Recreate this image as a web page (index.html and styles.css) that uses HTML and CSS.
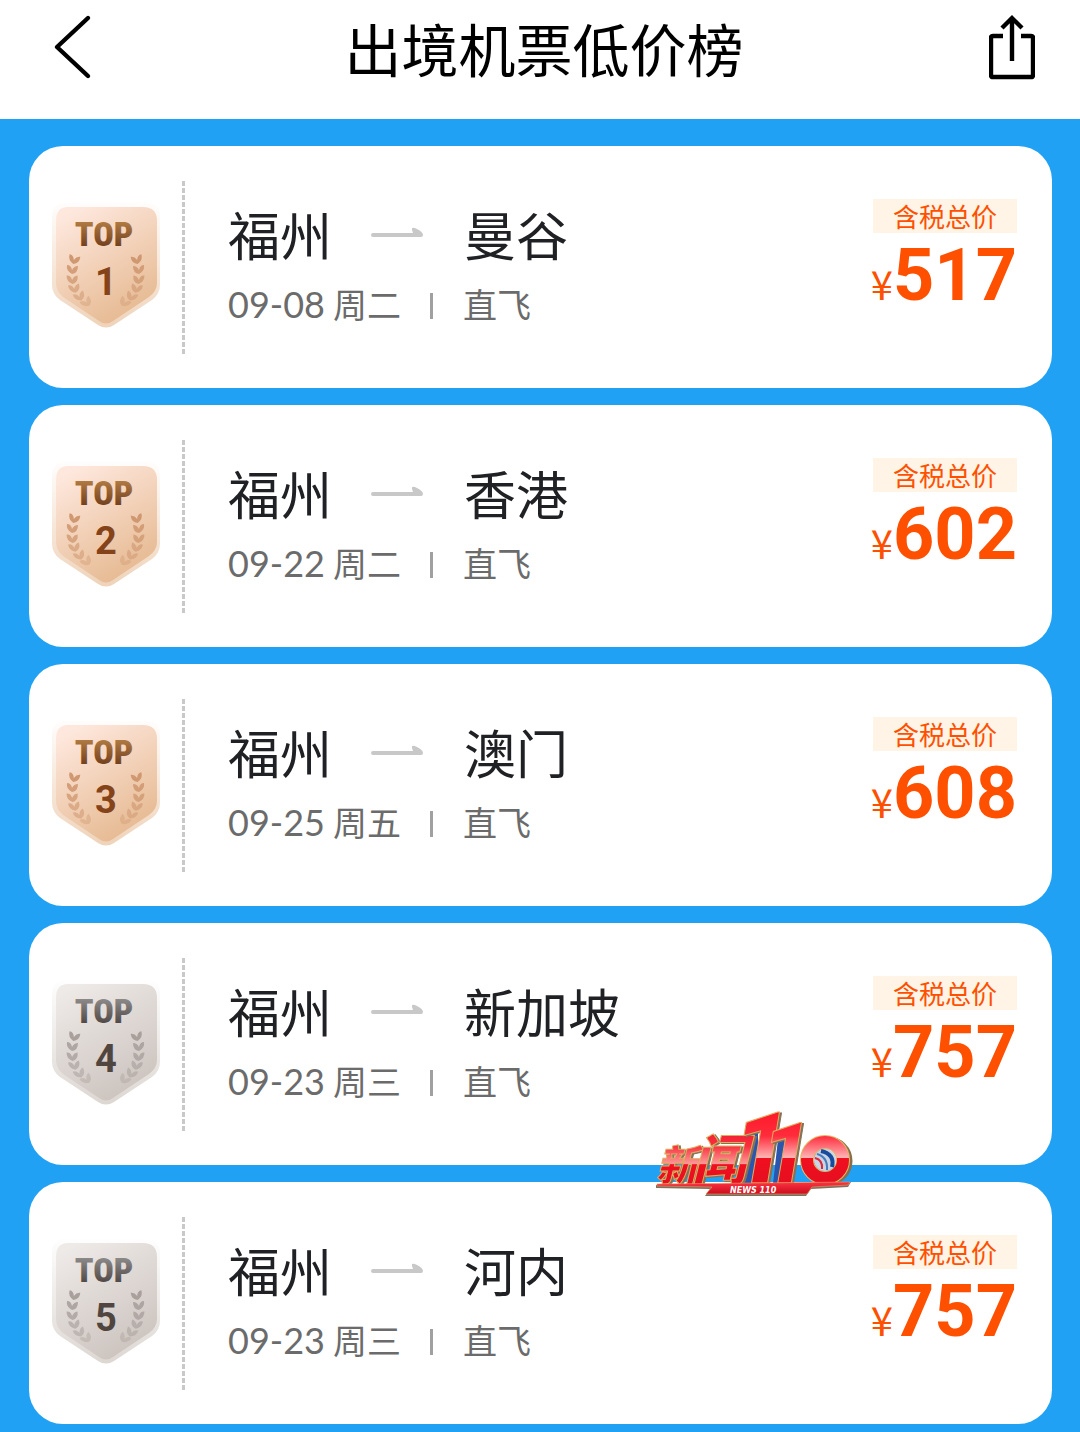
FILE: index.html
```html
<!DOCTYPE html>
<html lang="zh-CN">
<head>
<meta charset="utf-8">
<meta name="viewport" content="width=device-width, initial-scale=1">
<title>出境机票低价榜</title>
<link rel="stylesheet" href="styles.css">
</head>
<body>
<svg class="defs" width="0" height="0" aria-hidden="true">
  <defs>
    <linearGradient id="bronze" x1="0.2" y1="0" x2="0.7" y2="1"><stop offset="0" stop-color="#fee8de"/><stop offset="1" stop-color="#e5b88f"/></linearGradient>
    <linearGradient id="bronzeRim" x1="0" y1="0" x2="0" y2="1"><stop offset="0" stop-color="#fffdfc"/><stop offset="1" stop-color="#efd3ba"/></linearGradient>
    <linearGradient id="bronzeText" x1="0" y1="0" x2="0" y2="1"><stop offset="0.2" stop-color="#b07a42"/><stop offset="0.85" stop-color="#6e3c1c"/></linearGradient>
    <linearGradient id="silver" x1="0.2" y1="0" x2="0.7" y2="1"><stop offset="0" stop-color="#eeeae7"/><stop offset="1" stop-color="#cbc2bd"/></linearGradient>
    <linearGradient id="silverRim" x1="0" y1="0" x2="0" y2="1"><stop offset="0" stop-color="#fefefe"/><stop offset="1" stop-color="#ddd7d2"/></linearGradient>
    <linearGradient id="silverText" x1="0" y1="0" x2="0" y2="1"><stop offset="0.2" stop-color="#8c8a89"/><stop offset="0.85" stop-color="#4c4442"/></linearGradient>
    <path id="leaf" d="M0 5Q-6 2-5-4Q-1-4 0 1Q2-3 6-3Q6 4 0 5Z"/>
    <g id="branch">
      <use href="#leaf" transform="translate(22 56) rotate(8)"/>
      <use href="#leaf" transform="translate(20 66)" opacity=".9"/>
      <use href="#leaf" transform="translate(20 76) rotate(-6)" opacity=".8"/>
      <use href="#leaf" transform="translate(22 85) rotate(-16)" opacity=".65"/>
      <use href="#leaf" transform="translate(27 93) rotate(-28)" opacity=".55"/>
      <use href="#leaf" transform="translate(34 99) rotate(-42)" opacity=".4"/>
    </g>
    <g id="laurel"><use href="#branch"/><use href="#branch" transform="translate(107 0) scale(-1 1)"/></g>
    <path id="rim" d="M14 0H94Q108 0 108 14V82Q108 91 100 97L62 122Q54 127 46 122L8 97Q0 91 0 82V14Q0 0 14 0Z"/>
    <path id="shield" d="M16 4H91Q105 4 105 18V80Q105 88 97 94L61 118Q54 123 47 118L11 94Q4 88 4 80V18Q4 4 16 4Z"/>
    <path id="arrow" d="M2 9Q0 9 0 11T2 13H50Q52 13 52 11Q52 8 46 5Q40 2 41 6L42 9Z"/>
  </defs>
</svg>

<header class="topbar">
  <button class="icon-btn back" type="button" aria-label="返回">
    <svg width="40" height="68" viewBox="0 0 40 68"><path d="M35 5L4 34L35 63" fill="none" stroke="#000" stroke-width="4.4" stroke-linecap="round" stroke-linejoin="round"/></svg>
  </button>
  <h1>出境机票低价榜</h1>
  <button class="icon-btn share" type="button" aria-label="分享">
    <svg width="46" height="68" viewBox="0 0 46 68" fill="none" stroke="#000" stroke-width="4.4"><path d="M14 23H4Q2 23 2 25V62Q2 64 4 64H42Q44 64 44 62V25Q44 23 42 23H32"/><path d="M23 48V5M13 15L23 5L33 15"/></svg>
  </button>
</header>

<main>
  <ol class="list">
    <li class="card">
      <svg class="badge bronze" viewBox="0 0 109 125" role="img" aria-label="TOP 1"><use href="#rim" class="rim"/><use href="#shield" class="shield"/><use href="#laurel" class="laurel"/><text class="top" x="52" y="43">TOP</text><text class="rank" x="54" y="92">1</text></svg>
      <div class="divider"></div>
      <div class="info">
        <h2 class="route"><span>福州</span><svg class="arrow" viewBox="0 0 52 20" aria-hidden="true"><use href="#arrow"/></svg><span>曼谷</span></h2>
        <p class="meta"><span class="date">09-08</span><span>周二</span><i class="bar"></i><span>直飞</span></p>
      </div>
      <div class="fare"><span class="tag">含税总价</span><span class="price"><span class="yen">¥</span>517</span></div>
    </li>
    <li class="card">
      <svg class="badge bronze" viewBox="0 0 109 125" role="img" aria-label="TOP 2"><use href="#rim" class="rim"/><use href="#shield" class="shield"/><use href="#laurel" class="laurel"/><text class="top" x="52" y="43">TOP</text><text class="rank" x="54" y="92">2</text></svg>
      <div class="divider"></div>
      <div class="info">
        <h2 class="route"><span>福州</span><svg class="arrow" viewBox="0 0 52 20" aria-hidden="true"><use href="#arrow"/></svg><span>香港</span></h2>
        <p class="meta"><span class="date">09-22</span><span>周二</span><i class="bar"></i><span>直飞</span></p>
      </div>
      <div class="fare"><span class="tag">含税总价</span><span class="price"><span class="yen">¥</span>602</span></div>
    </li>
    <li class="card">
      <svg class="badge bronze" viewBox="0 0 109 125" role="img" aria-label="TOP 3"><use href="#rim" class="rim"/><use href="#shield" class="shield"/><use href="#laurel" class="laurel"/><text class="top" x="52" y="43">TOP</text><text class="rank" x="54" y="92">3</text></svg>
      <div class="divider"></div>
      <div class="info">
        <h2 class="route"><span>福州</span><svg class="arrow" viewBox="0 0 52 20" aria-hidden="true"><use href="#arrow"/></svg><span>澳门</span></h2>
        <p class="meta"><span class="date">09-25</span><span>周五</span><i class="bar"></i><span>直飞</span></p>
      </div>
      <div class="fare"><span class="tag">含税总价</span><span class="price"><span class="yen">¥</span>608</span></div>
    </li>
    <li class="card">
      <svg class="badge silver" viewBox="0 0 109 125" role="img" aria-label="TOP 4"><use href="#rim" class="rim"/><use href="#shield" class="shield"/><use href="#laurel" class="laurel"/><text class="top" x="52" y="43">TOP</text><text class="rank" x="54" y="92">4</text></svg>
      <div class="divider"></div>
      <div class="info">
        <h2 class="route"><span>福州</span><svg class="arrow" viewBox="0 0 52 20" aria-hidden="true"><use href="#arrow"/></svg><span>新加坡</span></h2>
        <p class="meta"><span class="date">09-23</span><span>周三</span><i class="bar"></i><span>直飞</span></p>
      </div>
      <div class="fare"><span class="tag">含税总价</span><span class="price"><span class="yen">¥</span>757</span></div>
    </li>
    <li class="card">
      <svg class="badge silver" viewBox="0 0 109 125" role="img" aria-label="TOP 5"><use href="#rim" class="rim"/><use href="#shield" class="shield"/><use href="#laurel" class="laurel"/><text class="top" x="52" y="43">TOP</text><text class="rank" x="54" y="92">5</text></svg>
      <div class="divider"></div>
      <div class="info">
        <h2 class="route"><span>福州</span><svg class="arrow" viewBox="0 0 52 20" aria-hidden="true"><use href="#arrow"/></svg><span>河内</span></h2>
        <p class="meta"><span class="date">09-23</span><span>周三</span><i class="bar"></i><span>直飞</span></p>
      </div>
      <div class="fare"><span class="tag">含税总价</span><span class="price"><span class="yen">¥</span>757</span></div>
      <svg class="news-logo" viewBox="0 0 200 92" role="img" aria-label="新闻110">
        <defs>
          <linearGradient id="red" gradientUnits="userSpaceOnUse" x1="0" y1="0" x2="0" y2="80"><stop offset="0" stop-color="#ff1626"/><stop offset=".35" stop-color="#ff2c3c"/><stop offset=".62" stop-color="#ffb4b4"/><stop offset=".63" stop-color="#f0101f"/><stop offset="1" stop-color="#e30e20"/></linearGradient>
          <linearGradient id="redLow" gradientUnits="userSpaceOnUse" x1="0" y1="20" x2="0" y2="80"><stop offset="0" stop-color="#f01a2a"/><stop offset=".3" stop-color="#f8303e"/><stop offset=".6" stop-color="#ff9a9a"/><stop offset=".61" stop-color="#f0101f"/><stop offset="1" stop-color="#e30e20"/></linearGradient>
          <linearGradient id="base" x1="0" y1="0" x2="0" y2="1"><stop offset="0" stop-color="#ff3342"/><stop offset="1" stop-color="#c90d1d"/></linearGradient>
        </defs>
        <path d="M88 76L96 25L104 22V76ZM119 76L124 31L134 28V76Z" fill="#2c55ae"/>
        <g class="face">
          <text class="word" x="2" y="73" font-size="42">新</text>
          <text class="word" x="38" y="72" font-size="54">闻</text>
          <text class="num" x="79" y="75" font-size="100">1</text>
          <text class="num" x="108" y="75" font-size="85">1</text>
        </g>
        <circle cx="174" cy="53" r="18" fill="none" stroke="#87704d" stroke-width="13"/>
        <circle cx="171" cy="52" r="18" fill="none" stroke="#e5b765" stroke-width="14"/>
        <circle cx="171" cy="52" r="18" fill="none" stroke="url(#red)" stroke-width="12"/>
        <circle cx="171" cy="52" r="11" fill="#c9d5e4"/>
        <path d="M167 43Q181 46 178 59" fill="none" stroke="#174b9c" stroke-width="4"/>
        <path d="M163 46Q174 49 173 62" fill="none" stroke="#4a7cbd" stroke-width="2"/>
        <path d="M161 50Q169 52 168 61" fill="none" stroke="#df293b" stroke-width="2"/>
        <path d="M2 77L197 74L194 79L157 81L152 88H51L56 81L2 80Z" fill="#806e5e"/>
        <path d="M3 76L196 74L194 77L158 79L153 86H52L58 79L3 78Z" fill="url(#base)" stroke="#e8a061" stroke-width=".6"/>
        <text class="caption" x="76" y="85">NEWS 110</text>
      </svg>
    </li>
  </ol>
</main>
</body>
</html>
```
FILE: styles.css
```css
* {
  box-sizing: border-box;
}

body {
  margin: 0;
  background: #20a1f3;
  color: #202124;
  font-family: "Noto Sans CJK SC", "Noto Sans", sans-serif;
}

h1, h2, p, ol {
  margin: 0;
  padding: 0;
  font-weight: 400;
}

svg {
  display: block;
}

.defs {
  position: absolute;
}

.topbar {
  display: grid;
  grid-template-columns: 1fr auto 1fr;
  align-items: center;
  padding: 4px 45px 29px 53px;
  background: #fff;
}

.topbar h1 {
  color: #000;
  font-size: 57px;
  line-height: 86px;
  text-align: center;
}

.icon-btn {
  padding: 0;
  border: 0;
  background: none;
}

.back {
  justify-self: start;
}

.share {
  justify-self: end;
}

.list {
  display: flex;
  flex-direction: column;
  gap: 17px;
  padding: 27px 28px 7px 29px;
  list-style: none;
}

.card {
  position: relative;
  display: flex;
  align-items: flex-start;
  padding: 35px 35px 34px 23px;
  border-radius: 34px;
  background: #fff;
}

.badge {
  flex: none;
  width: 109px;
  height: 125px;
  margin-top: 22px;
}

.badge text {
  text-anchor: middle;
  font-weight: 700;
}

.badge .top {
  font-family: "Roboto Condensed", "Liberation Sans Narrow", Roboto, sans-serif;
  font-size: 34px;
  font-weight: 900;
}

.rank {
  font-family: Roboto, sans-serif;
  font-size: 38px;
}

.bronze .rim { fill: url(#bronzeRim); }
.bronze .shield { fill: url(#bronze); }
.bronze .laurel { fill: #cf9871; }
.bronze .top { fill: url(#bronzeText); }
.bronze .rank { fill: #85431a; }
.silver .rim { fill: url(#silverRim); }
.silver .shield { fill: url(#silver); }
.silver .laurel { fill: #a9a09c; }
.silver .top { fill: url(#silverText); }
.silver .rank { fill: #51453f; }

.divider {
  flex: none;
  width: 3px;
  height: 173px;
  margin: 0 43px 0 21px;
  background: repeating-linear-gradient(#c9c9c9 0 5px, transparent 5px 7px);
}

.info {
  flex: 1;
  padding-top: 19px;
}

.route {
  display: flex;
  align-items: center;
  font-size: 52px;
  line-height: 68px;
}

.arrow {
  width: 52px;
  height: 20px;
  margin: 0 41px 0 39px;
  fill: #c8c8c8;
}

.meta {
  display: flex;
  align-items: center;
  margin-top: 14px;
  color: #6b6b6b;
  font-size: 34px;
  line-height: 44px;
}

.date {
  margin-right: 8px;
  font-family: Lato, sans-serif;
  font-size: 36px;
}

.bar {
  width: 3px;
  height: 26px;
  margin: 4px 30px 0 29px;
  background: #a0a0a0;
}

.fare {
  display: flex;
  flex-direction: column;
  align-items: flex-end;
  padding-top: 18px;
  color: #ff5000;
}

.tag {
  padding: 0 20px;
  background: #fff4e6;
  font-size: 26px;
  line-height: 34px;
}

.price {
  margin-top: 7px;
  font-family: Roboto, sans-serif;
  font-size: 72px;
  font-weight: 700;
  line-height: 72px;
}

.yen {
  font-family: "Noto Sans CJK SC", sans-serif;
  font-size: 40px;
  font-weight: 400;
  line-height: 40px;
}

/* Broadcaster mark straddling the gap above the last card */
.news-logo {
  position: absolute;
  top: -74px;
  right: 198px;
  width: 200px;
  height: 92px;
  overflow: visible;
}

.news-logo text {
  font-family: "Noto Sans CJK SC", sans-serif;
  font-weight: 900;
  font-style: italic;
}

.face text {
  stroke: #e0ad5e;
  stroke-width: 1px;
  filter: drop-shadow(2px 1px 0 #857158);
}

.news-logo .word {
  fill: url(#redLow);
}

.news-logo .num {
  fill: url(#red);
  font-family: Roboto, sans-serif;
}

.news-logo .caption {
  fill: #fff;
  font-family: "DejaVu Sans", sans-serif;
  font-size: 8px;
  font-weight: 700;
}
```
